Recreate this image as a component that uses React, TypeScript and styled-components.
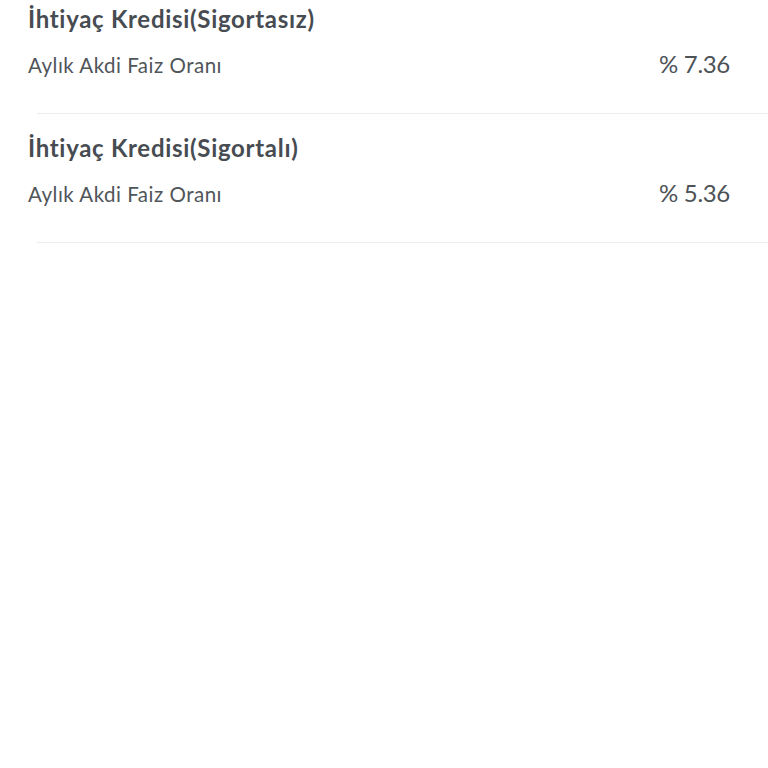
import React from "react";
import styled, { createGlobalStyle } from "styled-components";

const Global = createGlobalStyle`
  html, body { margin: 0; padding: 0; background: #ffffff; }
  body { font-family: Lato, "Noto Sans", sans-serif; }
`;

const List = styled.div`
  display: flex;
  flex-direction: column;
  width: 768px;
  margin-top: -15px;
`;

const Item = styled.div`
  display: flex;
  flex-direction: column;
  height: 129px;
  box-sizing: border-box;
  padding-top: 19px;
`;

const Title = styled.div`
  padding-left: 28px;
  font-size: 24px;
  font-weight: 700;
  line-height: 30px;
  letter-spacing: 0.7px;
  color: #474c52;
`;

const Line = styled.div`
  display: flex;
  justify-content: space-between;
  align-items: baseline;
  padding: 0 38px 0 28px;
  margin-top: 15px;
  line-height: 30px;
`;

const Label = styled.span`
  font-size: 20.5px;
  letter-spacing: 0.5px;
  color: #50555a;
`;

const Value = styled.span`
  font-size: 24px;
  letter-spacing: -0.3px;
  color: #4d5257;
`;

const Divider = styled.div`
  margin-top: auto;
  margin-left: 37px;
  height: 1px;
  background: #ececec;
`;

const rows = [
  { title: "İhtiyaç Kredisi(Sigortasız)", label: "Aylık Akdi Faiz Oranı", value: "% 7.36" },
  { title: "İhtiyaç Kredisi(Sigortalı)", label: "Aylık Akdi Faiz Oranı", value: "% 5.36" },
];

export default function App() {
  return (
    <>
      <Global />
      <List>
        {rows.map((r) => (
          <Item key={r.title}>
            <Title>{r.title}</Title>
            <Line>
              <Label>{r.label}</Label>
              <Value>{r.value}</Value>
            </Line>
            <Divider />
          </Item>
        ))}
      </List>
    </>
  );
}
